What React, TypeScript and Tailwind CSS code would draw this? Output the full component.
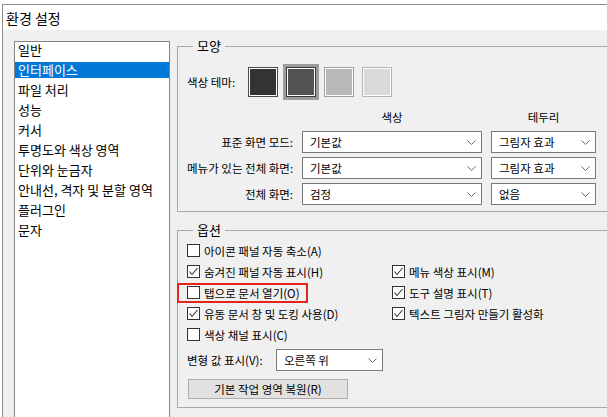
import React from 'react';

const menuItems = [
  '일반',
  '인터페이스',
  '파일 처리',
  '성능',
  '커서',
  '투명도와 색상 영역',
  '단위와 눈금자',
  '안내선, 격자 및 분할 영역',
  '플러그인',
  '문자',
];

const swatches = [
  { fill: 'bg-[#333333]', border: 'border-[#4a4a4a]', selected: false },
  { fill: 'bg-[#535353]', border: 'border-[#3a3a3a]', selected: true },
  { fill: 'bg-[#b8b8b8]', border: 'border-[#a0a0a0]', selected: false },
  { fill: 'bg-[#dadada]', border: 'border-[#b4b4b4]', selected: false },
];

function Chevron() {
  return (
    <svg width="9" height="5" viewBox="0 0 9 5" className="shrink-0">
      <polyline points="0.5,0.5 4.5,4.5 8.5,0.5" fill="none" stroke="#6b6b6b" strokeWidth="1" />
    </svg>
  );
}

function Select({ value, width }: { value: string; width: string }) {
  return (
    <div className={`${width} h-[22px] border border-[#7a7a7a] bg-white flex items-center justify-between pl-[7px] pr-[5px]`}>
      <span>{value}</span>
      <Chevron />
    </div>
  );
}

function Checkbox({ checked, label }: { checked: boolean; label: string }) {
  return (
    <div className="flex items-center gap-[4px] h-[21px]">
      <div className="w-[13px] h-[13px] shrink-0 border border-[#333333] bg-white flex items-center justify-center">
        {checked && (
          <svg width="11" height="11" viewBox="0 0 11 11">
            <polyline points="1.5,5.5 4,8.5 9.5,2" fill="none" stroke="#333333" strokeWidth="1.1" />
          </svg>
        )}
      </div>
      <span className="whitespace-nowrap">{label}</span>
    </div>
  );
}

export default function App() {
  return (
    <div className="w-[607px] h-[417px] overflow-hidden bg-white pt-[4px] pl-[2px] text-[11.5px] leading-[16px] text-black font-['Noto_Sans_CJK_KR','Noto_Sans',sans-serif]">
      <div className="w-[640px] h-[440px] border-l border-t border-[#8c8c8c] flex flex-col">
        <div className="h-[25px] shrink-0 bg-white pl-[3px] flex items-center text-[14px]">환경 설정</div>

        <div className="flex-1 bg-[#f0f0f0] flex items-start pl-[11px]">
          {/* left menu */}
          <div className="mt-[11px] w-[156px] h-[400px] border border-[#828282] bg-white text-[13px]">
            {menuItems.map((item, i) => (
              <div
                key={item}
                className={`h-[16px] mb-[4px] pl-[3px] flex items-center whitespace-nowrap ${
                  i === 1 ? 'bg-[#0078d7] text-white' : ''
                }`}
              >
                {item}
              </div>
            ))}
          </div>

          {/* right side */}
          <div className="ml-[7px] mt-[8px] w-[450px] flex flex-col">
            <fieldset className="border border-[#a8a8a8] pl-[9px] pb-[6px]">
              <legend className="ml-[6px] px-[4px] text-[13px] leading-[16px]">모양</legend>

              <div className="mt-[13px] flex items-center">
                <span className="w-[61px] whitespace-nowrap">색상 테마:</span>
                <div className="flex gap-[8px]">
                  {swatches.map((s, i) => (
                    <div
                      key={i}
                      className={`w-[30px] h-[30px] border ${s.border} ${s.fill} shadow-[inset_0_0_0_1px_white] ${
                        s.selected ? 'outline-[3px] outline-solid outline-[#9c9c9c]' : ''
                      }`}
                    />
                  ))}
                </div>
              </div>

              <div className="mt-[12px] grid grid-cols-[106px_180px_105px] gap-x-[9px] gap-y-[4px] items-center">
                <span />
                <span className="text-center h-[16px]">색상</span>
                <span className="text-center h-[16px]">테두리</span>

                <span className="text-right whitespace-nowrap mt-[2px]">표준 화면 모드:</span>
                <div className="mt-[2px]"><Select value="기본값" width="w-[180px]" /></div>
                <div className="mt-[2px]"><Select value="그림자 효과" width="w-[105px]" /></div>

                <span className="text-right whitespace-nowrap">메뉴가 있는 전체 화면:</span>
                <Select value="기본값" width="w-[180px]" />
                <Select value="그림자 효과" width="w-[105px]" />

                <span className="text-right whitespace-nowrap">전체 화면:</span>
                <Select value="검정" width="w-[180px]" />
                <Select value="없음" width="w-[105px]" />
              </div>
            </fieldset>

            <fieldset className="mt-[10px] border border-[#a8a8a8] pl-[9px] pb-[8px]">
              <legend className="ml-[6px] px-[4px] text-[13px] leading-[16px]">옵션</legend>

              <div className="pt-[2px] grid grid-cols-[205px_1fr]">
                <Checkbox checked={false} label="아이콘 패널 자동 축소(A)" />
                <span />
                <Checkbox checked={true} label="숨겨진 패널 자동 표시(H)" />
                <Checkbox checked={true} label="메뉴 색상 표시(M)" />
                <div className="relative">
                  <Checkbox checked={false} label="탭으로 문서 열기(O)" />
                  <div className="absolute left-[-10px] top-[1px] w-[131px] h-[20px] border-2 border-[#e3261c]" />
                </div>
                <Checkbox checked={true} label="도구 설명 표시(T)" />
                <Checkbox checked={true} label="유동 문서 창 및 도킹 사용(D)" />
                <Checkbox checked={true} label="텍스트 그림자 만들기 활성화" />
                <Checkbox checked={false} label="색상 채널 표시(C)" />
                <span />
              </div>

              <div className="mt-[4px] flex items-center">
                <span className="w-[89px] whitespace-nowrap">변형 값 표시(V):</span>
                <Select value="오른쪽 위" width="w-[107px]" />
              </div>

              <button className="mt-[8px] ml-[1px] w-[160px] h-[20px] border border-[#adadad] bg-[#e1e1e1] flex items-center justify-center">
                기본 작업 영역 복원(R)
              </button>
            </fieldset>
          </div>
        </div>
      </div>
    </div>
  );
}
